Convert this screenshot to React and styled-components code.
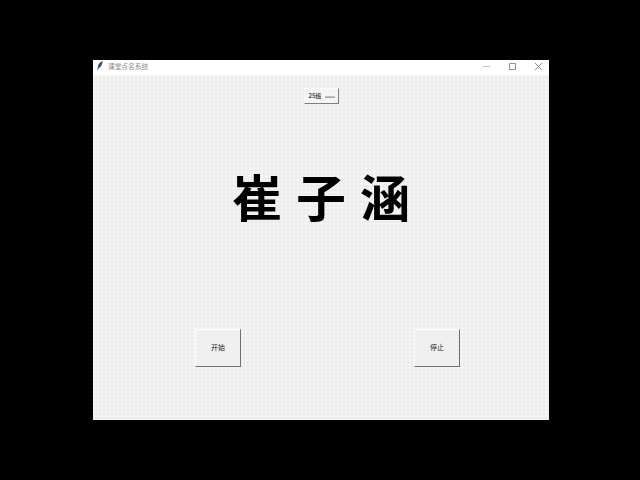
import React from 'react';
import styled, { createGlobalStyle } from 'styled-components';

const GlobalStyle = createGlobalStyle`
  html, body {
    margin: 0;
    padding: 0;
    height: 100%;
    background: #000;
    overflow: hidden;
  }
  #root {
    height: 100%;
  }
`;

const Screen = styled.div`
  box-sizing: border-box;
  width: 640px;
  height: 480px;
  padding: 60px 91px 60px 93px;
  background: #000;
  font-family: "Noto Sans CJK SC", "Liberation Sans", sans-serif;
`;

const Window = styled.div`
  display: flex;
  flex-direction: column;
  height: 100%;
  background: #fff;
`;

const TitleBar = styled.div`
  box-sizing: border-box;
  flex: 0 0 15px;
  display: flex;
  align-items: center;
  padding: 0 0 2px 3px;
  background: #fff;
`;

const Title = styled.span`
  margin-left: 4px;
  font-size: 6.7px;
  line-height: 1;
  color: #8a8a8a;
`;

const WindowControls = styled.div`
  display: flex;
  align-items: center;
  margin-left: auto;
  margin-right: 6px;
  gap: 17px;
`;

const ControlIcon = styled.svg`
  display: block;
  width: 9px;
  height: 9px;
  stroke: ${(p) => (p.$faint ? '#c4c4c4' : '#8f8f8f')};
  stroke-width: 1;
  fill: none;
`;

const Body = styled.div`
  flex: 1;
  display: flex;
  flex-direction: column;
  align-items: center;
  padding-top: 13px;
  background-color: #eeeeee;
  background-image: radial-gradient(circle at 1px 1px, #f9f9f9 0.7px, transparent 0.9px);
  background-size: 4px 4px;
`;

const SelectBox = styled.div`
  box-sizing: border-box;
  display: flex;
  align-items: center;
  justify-content: space-between;
  width: 35px;
  height: 16px;
  padding: 0 3px 2px 4px;
  background: #f4f4f4;
  border: 1px solid;
  border-color: #fbfbfb #7d7d7d #7d7d7d #fbfbfb;
  font-size: 6px;
  font-weight: 500;
  color: #111;
  white-space: nowrap;
`;

const SelectMark = styled.span`
  box-sizing: border-box;
  width: 10px;
  height: 2px;
  margin-top: 3px;
  background: #c4c4c4;
  border-bottom: 1px solid #a4a4a4;
`;

const NameRow = styled.div`
  display: flex;
  justify-content: center;
  gap: 14px;
  margin-top: 63px;
  font-size: 50px;
  font-weight: 700;
  line-height: 56px;
  color: #000;
`;

const ButtonRow = styled.div`
  display: flex;
  justify-content: space-between;
  align-self: stretch;
  margin-top: 106px;
  padding: 0 89px 0 102px;
`;

const ActionButton = styled.button`
  box-sizing: border-box;
  width: 46px;
  height: 38px;
  padding: 0 0 2px;
  background: #f0f0f0;
  border: 1px solid;
  border-color: #fbfbfb #6f6f6f #6f6f6f #fbfbfb;
  font-family: inherit;
  font-size: 7px;
  color: #222;
`;

const App = () => {
  return (
    <>
      <GlobalStyle />
      <Screen>
        <Window>
          <TitleBar>
            <svg width="8" height="11" viewBox="0 0 8 11">
              <path d="M7 0 C4 1 2 3 2 6 L1 10 L3 7 C5 6 6 3 7 0 Z" fill="#2a4674" />
            </svg>
            <Title>课堂点名系统</Title>
            <WindowControls>
              <ControlIcon $faint viewBox="0 0 9 9">
                <path d="M1 4.5 H8" />
              </ControlIcon>
              <ControlIcon viewBox="0 0 9 9">
                <path d="M1.5 1.5 H7.5 V7.5 H1.5 Z" />
              </ControlIcon>
              <ControlIcon viewBox="0 0 9 9">
                <path d="M1 1 L8 8 M8 1 L1 8" />
              </ControlIcon>
            </WindowControls>
          </TitleBar>
          <Body>
            <SelectBox>
              25班
              <SelectMark />
            </SelectBox>
            <NameRow>
              <span>崔</span>
              <span>子</span>
              <span>涵</span>
            </NameRow>
            <ButtonRow>
              <ActionButton>开始</ActionButton>
              <ActionButton>停止</ActionButton>
            </ButtonRow>
          </Body>
        </Window>
      </Screen>
    </>
  );
};

export default App;
